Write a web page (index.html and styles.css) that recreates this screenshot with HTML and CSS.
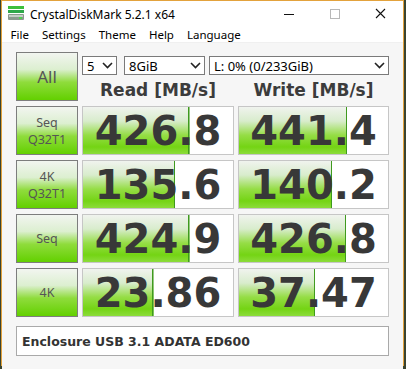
FILE: index.html
```html
<!DOCTYPE html>
<html lang="en">
<head>
  <meta charset="UTF-8">
  <title>CrystalDiskMark 5.2.1 x64</title>
  <link rel="stylesheet" href="styles.css">
</head>
<body>
  <div class="window">
    <div class="titlebar">
      <svg class="app-icon" width="16" height="14" viewBox="0 0 16 14">
        <rect x="0" y="0" width="16" height="3" fill="#3cbf3c"/>
        <rect x="0" y="4" width="16" height="3" fill="#2fa84a"/>
        <rect x="0" y="8" width="16" height="6" rx="1" fill="#8a9a8e"/>
        <rect x="1" y="9" width="14" height="2" fill="#c4cec6"/>
        <rect x="11" y="11" width="3" height="2" fill="#4ed04e"/>
      </svg>
      <span class="title">CrystalDiskMark 5.2.1 x64</span>
      <div class="controls">
        <svg width="46" height="26" viewBox="0 0 46 26"><path d="M18 13.5h10" stroke="#111" stroke-width="1"/></svg>
        <svg width="46" height="26" viewBox="0 0 46 26"><rect x="18.5" y="8.5" width="9" height="9" fill="none" stroke="#b8b8b8" stroke-width="1"/></svg>
        <svg width="46" height="26" viewBox="0 0 46 26"><path d="M18 8l9 9M27 8l-9 9" stroke="#111" stroke-width="1.1"/></svg>
      </div>
    </div>
    <div class="menubar">
      <span>File</span>
      <span>Settings</span>
      <span>Theme</span>
      <span>Help</span>
      <span>Language</span>
    </div>
    <div class="client">
      <div class="btn all">All</div>
      <div class="settings">
        <div class="selects">
          <div class="select count">5<svg width="11" height="7" viewBox="0 0 11 7"><path d="M1 1l4.5 4.5L10 1" fill="none" stroke="#222" stroke-width="1.6"/></svg></div>
          <div class="select size">8GiB<svg width="11" height="7" viewBox="0 0 11 7"><path d="M1 1l4.5 4.5L10 1" fill="none" stroke="#222" stroke-width="1.6"/></svg></div>
          <div class="select drive">L: 0% (0/233GiB)<svg width="11" height="7" viewBox="0 0 11 7"><path d="M1 1l4.5 4.5L10 1" fill="none" stroke="#222" stroke-width="1.6"/></svg></div>
        </div>
        <div class="heads">
          <div>Read [MB/s]</div>
          <div>Write [MB/s]</div>
        </div>
      </div>

      <div class="btn label"><span>Seq</span><span>Q32T1</span></div>
      <div class="cell" style="--w:71%">426.8</div>
      <div class="cell" style="--w:72.5%">441.4</div>

      <div class="btn label"><span>4K</span><span>Q32T1</span></div>
      <div class="cell" style="--w:61.5%">135.6</div>
      <div class="cell" style="--w:62.5%">140.2</div>

      <div class="btn label"><span>Seq</span></div>
      <div class="cell" style="--w:71%">424.9</div>
      <div class="cell" style="--w:72%">426.8</div>

      <div class="btn label"><span>4K</span></div>
      <div class="cell" style="--w:47%">23.86</div>
      <div class="cell" style="--w:51%">37.47</div>

      <div class="comment">Enclosure USB 3.1 ADATA ED600</div>
    </div>
  </div>
</body>
</html>
```

FILE: styles.css
```css
* {
  box-sizing: border-box;
}

body {
  margin: 0;
  background: #3a4430;
  font-family: "Noto Sans", "DejaVu Sans", sans-serif;
  width: 406px;
  height: 369px;
  overflow: hidden;
}

.window {
  margin-left: 1px;
  width: 403px;
  height: 366px;
  border: 1px solid #e3a23c;
  background: #fff;
  display: flex;
  flex-direction: column;
}

.titlebar {
  height: 26px;
  display: flex;
  align-items: center;
  background: #fff;
}

.app-icon {
  margin: 0 0 3px 6px;
}

.title {
  margin-left: 6px;
  font-size: 12px;
  color: #000;
}

.controls {
  margin-left: auto;
  display: flex;
  margin-right: -1px;
}

.menubar {
  height: 18px;
  display: flex;
  align-items: center;
  padding-left: 2px;
  font-size: 11.5px;
  color: #000;
}

.menubar span {
  padding: 0 6.5px;
}

.client {
  flex: 1;
  background: #f6f6f6;
  border-top: 1px solid #f0f0f0;
  padding: 9px 13px 0 14px;
  display: grid;
  grid-template-columns: 62px 152px 151px;
  grid-auto-rows: 49px;
  column-gap: 4px;
  row-gap: 5px;
  align-content: start;
}

.btn {
  border: 1px solid #7d7d7d;
  background: linear-gradient(to bottom, #f2f5f0 0%, #dcefd0 35%, #8fdc3c 62%, #63d000 100%);
  color: #555;
  display: flex;
  flex-direction: column;
  align-items: center;
  justify-content: center;
  text-align: center;
}

.all {
  font-size: 17px;
}

.label {
  font-size: 12.5px;
  line-height: 17px;
}

.label span {
  display: block;
}

.settings {
  grid-column: 2 / 4;
  display: flex;
  flex-direction: column;
}

.selects {
  display: flex;
  margin-top: 4px;
  height: 19px;
}

.select {
  border: 1px solid #7a7a7a;
  background: #fff;
  font-size: 13px;
  color: #000;
  display: flex;
  align-items: center;
  justify-content: space-between;
  padding: 0 3px 0 4px;
}

.select svg {
  flex: none;
}

.count {
  width: 35px;
  margin-right: 7px;
}

.size {
  width: 81px;
  margin-right: 4px;
}

.drive {
  width: 180px;
}

.heads {
  display: grid;
  grid-template-columns: 152px 151px;
  column-gap: 4px;
  margin-top: 5px;
  font-family: "DejaVu Sans", sans-serif;
  font-weight: bold;
  font-size: 17px;
  color: #3c3c3c;
  text-align: center;
}

.cell {
  border: 1px solid #c6c6c6;
  background:
    linear-gradient(to left, #3f9a1e 1px, transparent 1px) 0 0 / var(--w) 100% no-repeat,
    linear-gradient(to bottom, #f0f3ee 0%, #d8eccc 30%, #95dd45 60%, #74d414 85%, #8cdc3a 100%) 0 0 / var(--w) 100% no-repeat,
    #fff;
  font-family: "DejaVu Sans", sans-serif;
  font-weight: bold;
  font-size: 40px;
  color: #383838;
  display: flex;
  align-items: center;
  justify-content: center;
  padding-top: 1px;
}

.comment {
  grid-column: 1 / 4;
  margin-top: 4px;
  height: 30px;
  border: 1px solid #a9a9a9;
  background: #fff;
  font-family: "DejaVu Sans", sans-serif;
  font-weight: bold;
  font-size: 12.5px;
  color: #333;
  display: flex;
  align-items: center;
  padding-left: 5px;
}
```
